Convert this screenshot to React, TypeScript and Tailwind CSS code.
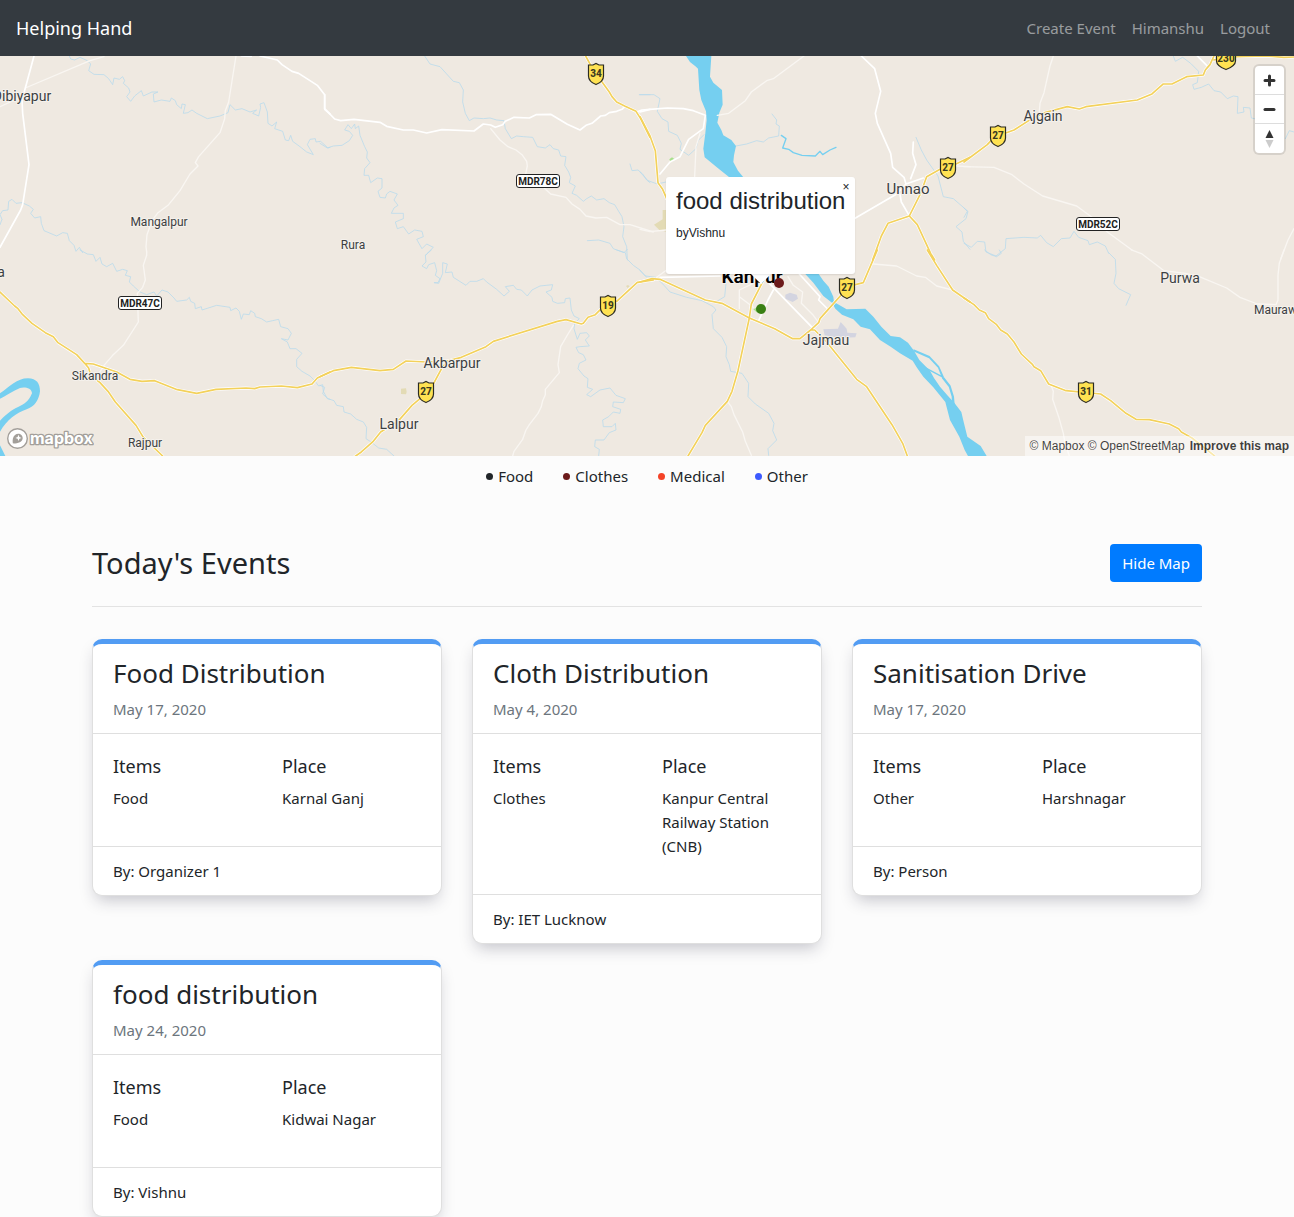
import React from "react";

type Sheet = {
  x: number;
  y: number;
  streams?: string;
  water?: string;
  channels?: string;
  minor?: string;
  major?: string;
  highway?: string;
  sand?: string;
  urban?: string;
  park?: string;
};

const sheets: Sheet[] = [
  {
    x: 0,
    y: -18,
    streams:
      "M208 18L212 27L224 30L240 22L262 32L272 42L266 62L282 73L312 74L326 86L338 104L342 84L358 88L368 80L374 92L370 100L386 114L390 126L380 140L392 154L404 138L424 122L430 138L456 126L474 126L460 132L462 156L484 150L510 154L514 144L526 152L530 164L544 176L546 162L556 164L550 190L564 188L576 180L590 190L622 206L660 198L684 188L690 164L706 180L726 176L750 186L770 180L758 190L776 198L782 172L780 162L792 158L802 186L804 220L816 228L830 216L824 236L848 244L856 270L866 272L872 256L878 274L900 290L920 306L940 314L922 284L930 268L946 266L948 276L962 274L984 294L990 292M0 524L6 508L0 494L8 482L24 480L26 454L36 448L48 460L66 458L88 468L100 478L92 490L104 504L122 500L124 520L132 542L170 558L188 548L202 550L208 572L222 586L228 604L238 592L248 608",
    minor:
      "M0 170L66 140M76 114L270 32L312 20M708 18L686 156L676 182L674 206L660 248L596 320L586 338L594 348L570 372L540 422L504 466L474 488L456 512L441 554L438 590L440 606",
    major:
      "M102 18L76 114L66 150L68 190L87 344L68 464L62 480L0 592M724 18L754 19M780 18L832 30L846 44L876 64L896 70L930 92L952 106L974 134L974 178L990 192",
  },
  {
    x: 0,
    y: 582,
    streams:
      "M240 0L262 12L280 14L288 34L300 22L306 42L320 50L338 40L350 64L368 58L382 62L376 76L392 80L388 96L400 108L420 126L440 134L462 126L470 138L486 120L504 126L522 144L530 154L560 150L568 142L572 154L584 160L586 176L604 170L606 180L650 166L690 172L692 182L708 174L718 184L724 208L730 192L748 194L752 182L764 190L766 200L784 206L800 216L818 212L836 208L842 230L864 236L874 250L864 270L844 266L862 276L870 296L888 296L906 310L890 328L890 350L906 364L930 378L944 392L956 408L968 404L970 424L982 446L990 448",
    water:
      "M0 430C30 410 50 385 84 385C110 386 120 400 120 424C117 450 104 470 80 478C50 488 20 510 0 545L0 512C25 485 45 475 60 468C80 460 90 445 96 430C96 412 70 410 60 414C40 422 15 440 0 446ZM0 586L16 618L0 618Z",
    minor: "M440 6L440 16L430 46L436 90L428 112L412 130L415 216L370 286L338 316L312 346L296 372",
    highway:
      "M0 126L44 168L54 176L68 194L96 220L136 248L160 260L174 278L230 314L254 340L280 342L350 366L390 388L426 394L464 392L532 419L590 430L648 418L738 414L764 416L780 411L844 408L892 413L936 402L952 384L990 366M254 340L266 354L272 376L300 398L324 424L346 456L408 526L430 562L488 618",
  },
  {
    x: 960,
    y: -18,
    streams:
      "M314 18L330 42L360 50L400 94L418 98L430 120L428 156L436 190L448 212L462 204L490 206L510 204L530 210L552 212L556 236L574 266L590 258L610 260L638 262L652 290L676 294L690 284L700 296L716 300L722 318L738 320L734 346L746 366L752 382L748 398L766 408L756 430L770 436L790 454L800 446L814 438L830 450L852 446L868 458L884 464L896 484L906 500L912 530L908 560L920 590L922 630M0 280L22 294L40 288L66 286L88 272L98 256L88 244L74 240L84 224L94 236L104 222L106 236L116 228L120 256L134 290L142 306L140 324L150 338L134 356L132 376L146 376L152 398L172 384L186 386L186 414L174 424L180 442L196 444L200 432L210 424L232 432L222 450L234 466L222 474L214 490L250 490L250 506L226 516L232 536L250 530L266 552L284 540L306 544L310 560L290 568L306 596L320 582L340 592L320 612L316 616M930 342L936 362L954 360L968 372L980 390L990 398M958 134L990 134M802 572L836 570L870 580L880 596L912 608L922 598",
    minor:
      "M512 236L540 270L564 290L588 300L606 314L620 334L622 348L617 372L670 412L692 432L738 442L756 462L780 478L798 498L828 504L860 502L900 524L930 524L1000 546",
    major:
      "M14 134L14 176L44 207L62 212L102 208L180 217L200 229L250 240L280 240L320 249L366 239L462 243L490 222L512 225L526 232L548 224L556 214L582 202L628 204L648 194L692 193L742 223L780 240L798 226L816 220L842 198L856 196L868 188L890 184L906 178L914 170M950 186L966 180L990 178",
    highway: "M797 18L820 60L868 126L876 140L890 156L914 168L948 184L962 206L990 262",
  },
  {
    x: 960,
    y: 582,
    streams:
      "M334 0L316 16L318 36L306 48L320 56L326 44L344 38L350 62L346 76L360 86L354 98L342 98L356 100L368 70L368 38L382 42L376 68L396 66L400 82L438 106L450 94L470 94L490 86L500 96L530 118L552 138L568 124L556 110L580 106L590 118L604 120L622 138L636 120L660 108L698 104L694 120L678 126L696 142L698 154L712 160L734 158L736 146L750 144L754 180L762 198L778 206L764 220L762 236L772 268L780 250L800 248L808 258L796 270L808 288L780 290L768 292L776 308L790 314L798 330L778 340L774 356L792 378L804 386L802 412L818 418L800 434L812 440L840 420L870 414L888 436L916 446L910 458L880 456L878 470L902 478L900 490L880 486L866 500L848 510L850 530L876 530L886 520L888 540L868 548L852 570L826 570L824 590L838 598L836 618M0 406L14 412L8 432L24 446L42 452L50 466L70 470L72 486L92 492L110 508L130 516L140 532L138 566L156 578L176 594L200 598L222 618M890 0L916 8L920 26L940 46L960 60L980 82",
    sand: "M243 416L258 415L260 426L258 433L243 432ZM918 108L924 105L929 109L923 114Z",
    minor:
      "M760 226L744 252L722 290L714 344L718 368L676 418L676 434L668 452L664 470L654 490L628 524L618 540L608 568L582 604L578 618",
    highway:
      "M0 380L40 362L94 352L180 362L220 358L258 333L320 336L386 332L424 322L498 290L520 274L712 214L738 209L784 222L790 220L804 202L826 194L850 170L890 154L952 97L1000 90M386 332L368 350L340 402L300 446L276 466L236 512L182 546L158 576L124 606L104 620",
  },
  {
    x: 1920,
    y: -18,
    streams:
      "M288 288L320 282L350 272L370 276L386 264L416 258L418 228L408 222L410 210L396 192M0 134L42 134L60 146L52 184L66 206L84 216L86 244L112 256L124 280L120 298L146 316L168 296L174 272L192 254M0 366L24 392L52 402L78 396M828 262L844 300L860 330L894 378L910 440L940 446L984 484L978 506L948 530L966 546L970 574L990 598",
    water:
      "M138 18L150 36L168 50L174 56L178 120L184 150L198 184L200 210L196 250L190 296L194 322L236 356L268 382L310 382L294 362L280 336L282 316L288 288L274 270L250 256L244 240L232 218L238 188L248 164L246 120L220 98L210 80L214 18Z",
    channels: "M424 256L438 266L428 294L446 298L460 308L486 316L526 318L540 304L548 314L570 300L588 292",
    sand: "M68 480L90 480L90 548L58 540L42 524L68 508Z",
    park: "M88 328L96 322L103 327L98 334L90 332Z",
    minor:
      "M232 196L266 190L316 152L334 126L380 92L400 86L492 18M164 380L168 290L180 250M948 348L990 350M0 538L30 545L78 540",
    major:
      "M0 186L30 178L82 174L130 176L160 182L196 196L190 236L146 268L120 320L90 336L60 372M664 18L704 56L722 124L706 190L712 220L752 310L758 352L792 382L798 402L850 384M640 508L770 432L798 402M820 276L818 310L828 344L812 386M780 432L784 456L806 494",
    highway:
      "M0 200L30 258L46 302L54 398L68 418L80 446M990 322L940 346L900 358L860 380L842 430L808 498L744 520L724 558L698 630M808 498L832 524L872 610L884 630",
  },
  {
    x: 1920,
    y: 582,
    streams:
      "M0 62L16 78L48 82L72 106L90 126L140 142L186 152L220 170L228 180L216 194L220 236L246 262L260 290L258 320L268 344L272 364L306 370L326 400L324 440L346 462L386 490L402 520L398 542L410 570L384 596L386 616M224 158L254 140L258 100",
    water:
      "M440 0L500 24L536 72L550 92L566 110L580 140L582 156L620 178L676 176L700 200L724 230L752 258L780 262L804 278L822 302L838 330L870 362L882 384L900 410L922 436L944 460L964 486L972 520L982 560L1022 588L1040 618L984 618L974 600L958 560L930 510L916 456L880 412L850 380L830 352L818 332L780 310L752 290L720 270L690 238L662 230L640 208L606 194L586 176L576 158L550 138L520 98L496 72Z",
    channels:
      "M822 300L868 320L896 350L910 382L930 408L940 440L942 462M822 303L868 323L896 353L908 384L928 410L937 440L938 462M838 344L910 382",
    urban:
      "M436 134L450 128L470 134L474 146L458 156L436 146ZM550 238L594 236L602 216L620 236L622 248L650 250L646 262L600 264L554 256Z",
    park: "M340 178L352 172L352 188Z",
    minor:
      "M262 454L274 470L282 494L308 546L316 574L334 616M700 42L770 48L830 78L856 82L890 108L938 120M444 80L460 106L488 126L484 160L520 196L536 218M298 176L298 120L340 100M50 82L80 60L200 62M298 140L340 172",
    major:
      "M60 82L240 78M388 100L520 236M400 120L384 150L356 212M478 72L540 140L536 150L560 174",
    highway:
      "M712 0L670 98L646 104L608 130L540 206L536 218L512 240L480 266L458 266L404 236L328 204L246 160L196 150L60 88L36 86L0 96M512 240L524 240L560 276L650 388L680 410L756 524L788 580L802 618M376 80L334 162L328 204L294 362L276 424L262 454L196 526L186 548L144 618M862 0L890 46L938 120L990 156",
  },
  {
    x: 2892,
    y: -18,
    streams:
      "M628 18L634 34L656 22L680 40L704 64L700 98L686 104L690 118L712 112L734 102L750 122L770 126L790 146L808 138L822 140L820 190L840 186L838 172L858 174L862 204L880 208M964 266L976 242L990 246M0 474L10 484L0 502M0 580L22 592L40 574L62 576L66 606L96 618L124 596L126 566L180 562L220 564L230 556L248 578L268 590L292 566L318 564L330 544L344 562L372 572L376 584L400 576L424 588L434 610",
    minor:
      "M0 350L90 352L144 374L180 402L236 438L338 468L384 502L430 546L504 600M950 628L972 570L990 536M268 18L258 48L240 128L228 160L226 184",
    major: "M700 18L728 46",
    highway:
      "M0 336L70 284L90 262L150 240L200 208L242 188L310 170L346 177L366 170L520 150L564 132L598 102L624 102L668 80L718 75L724 60L738 44L750 18M750 30L780 22L840 19L910 18L960 22L990 21",
  },
  {
    x: 2892,
    y: 582,
    streams: "M434 8L454 28L456 70L450 100L464 116L500 134L486 166M62 0L80 14L98 20L112 10L106 0",
    minor:
      "M502 0L534 12L600 62L664 70L706 80L788 114L828 142L880 162L936 164L942 150L942 76L946 40L960 0M262 408L268 424L266 448L284 500L298 550L302 574L316 618",
    highway:
      "M0 144L30 164L46 180L64 188L74 206L98 224L110 240L130 252L150 276L172 312L206 344L210 350L230 362L254 402L306 422L410 432L440 452L486 490L516 508L556 509L616 522L644 536L652 546L684 564L752 618",
  },
];

type LayerKey = Exclude<keyof Sheet, "x" | "y">;

function Layer({ of, ...style }: { of: LayerKey } & Omit<React.SVGProps<SVGGElement>, "of">) {
  return (
    <g fill="none" strokeLinejoin="round" strokeLinecap="round" {...style}>
      {sheets.map((s) =>
        s[of] ? <path key={`${s.x} ${s.y}`} transform={`translate(${s.x} ${s.y})`} d={s[of]} /> : null
      )}
    </g>
  );
}

const places = [
  { name: "Dibiyapur", x: 22, y: 45, size: 14 },
  { name: "Mangalpur", x: 159, y: 170, size: 12 },
  { name: "Rura", x: 353, y: 193, size: 12 },
  { name: "a", x: 1, y: 221, size: 14 },
  { name: "Sikandra", x: 95, y: 324, size: 12 },
  { name: "Rajpur", x: 145, y: 391, size: 12 },
  { name: "Akbarpur", x: 452, y: 312, size: 14 },
  { name: "Lalpur", x: 399, y: 373, size: 14 },
  { name: "Jajmau", x: 826, y: 289, size: 14 },
  { name: "Unnao", x: 908, y: 138, size: 15 },
  { name: "Ajgain", x: 1043, y: 65, size: 14 },
  { name: "Purwa", x: 1180, y: 227, size: 14 },
  { name: "Maurawan", x: 1282, y: 258, size: 12 },
];

const shields = [
  { ref: "34", x: 596, y: 18 },
  { ref: "19", x: 608, y: 250 },
  { ref: "27", x: 426, y: 336 },
  { ref: "27", x: 847, y: 232 },
  { ref: "27", x: 948, y: 112 },
  { ref: "27", x: 998, y: 80 },
  { ref: "31", x: 1086, y: 336 },
];

const plates = [
  { ref: "MDR78C", x: 538, y: 125 },
  { ref: "MDR47C", x: 140, y: 247 },
  { ref: "MDR52C", x: 1098, y: 168 },
];

function MapCanvas() {
  return (
    <svg
      className="block h-full w-full bg-[#efe9e1]"
      viewBox="0 0 1294 400"
      preserveAspectRatio="xMidYMid slice"
      role="img"
      aria-label="Map of events around Kanpur"
      fontFamily="Roboto, sans-serif"
    >
      <g transform="scale(0.33333)">
        <Layer of="sand" fill="#e3dbb5" />
        <Layer of="urban" fill="#d3d4e0" />
        <Layer of="park" fill="#a9e08c" />
        <Layer of="streams" stroke="#b9daec" strokeWidth="2.4" />
        <Layer of="water" fill="#75cff0" />
        <Layer of="channels" stroke="#75cff0" strokeWidth="4" />
        <Layer of="minor" stroke="#f9f6f2" strokeWidth="4" />
        <Layer of="major" stroke="#ffffff" strokeWidth="5" />
        <Layer of="highway" stroke="#ffffff" strokeWidth="9" />
        <Layer of="highway" stroke="#f3d15b" strokeWidth="5" />
      </g>

      <g textAnchor="middle" fill="#3c3f42" stroke="#f5f1ec" strokeWidth="2" strokeLinejoin="round" paintOrder="stroke">
        {places.map((p) => (
          <text key={p.name} x={p.x} y={p.y} fontSize={p.size}>
            {p.name}
          </text>
        ))}
        <text x="752" y="227" fontSize="19" fontWeight="600" fill="#000">
          Kanpur
        </text>
      </g>

      <g textAnchor="middle" fontWeight="700" fontSize="10">
        {shields.map((s) => (
          <g key={`${s.x} ${s.y}`} transform={`translate(${s.x} ${s.y})`}>
            <path
              d="M-7.5 -9H-3L0 -10.5L3 -9H7.5V2C7.5 6 4 9 0 10.5C-4 9 -7.5 6 -7.5 2Z"
              fill="#ffe252"
              stroke="#2b2b22"
              strokeWidth="1.2"
            />
            <text y="3" fill="#3a3a20" fontSize="10" fontWeight="800">
              {s.ref}
            </text>
          </g>
        ))}
        <g transform="translate(1226 3)">
          <path d="M-9.5 -9H9.5V2C9.5 6 4 9 0 10.5C-4 9 -9.5 6 -9.5 2Z" fill="#ffe252" stroke="#2b2b22" strokeWidth="1.2" />
          <text y="3" fill="#3a3a20" fontSize="10" fontWeight="800">
            230
          </text>
        </g>
        {plates.map((p) => (
          <g key={p.ref} transform={`translate(${p.x} ${p.y})`}>
            <rect x="-21.5" y="-6.5" width="43" height="13" rx="2.5" fill="#fff" stroke="#222" />
            <text y="4" fill="#222">
              {p.ref}
            </text>
          </g>
        ))}
      </g>

      <circle cx="779" cy="227" r="5" fill="#6c1a1a" />
      <circle cx="761" cy="253" r="5" fill="#3a8014" />
    </svg>
  );
}

function MapboxLogo() {
  return (
    <svg width="88" height="23" viewBox="0 0 88 23" aria-hidden="true">
      <circle cx="11.5" cy="11.5" r="9.8" fill="#fff" stroke="#a39f9a" strokeWidth="1.4" />
      <path
        d="M6.8 16.2C6.3 12.6 6.9 9.6 9 7.9C11.2 6.2 14.3 6.4 15.8 8.4C17.3 10.4 16.9 13 15 14.6C13 16.3 9.8 16.7 6.8 16.2Z"
        fill="#a39f9a"
      />
      <path d="M12.5 7.8L13.4 10L15.6 10.9L13.4 11.8L12.5 14L11.6 11.8L9.4 10.9L11.6 10Z" fill="#fff" />
      <text
        x="24"
        y="17"
        fontFamily="Inter, sans-serif"
        fontSize="16"
        fontWeight="700"
        fill="#fff"
        stroke="#a39f9a"
        strokeWidth="2.6"
        strokeLinejoin="round"
        paintOrder="stroke"
      >
        mapbox
      </text>
    </svg>
  );
}

function MapControls() {
  const button = "flex h-[29px] w-[29px] cursor-pointer items-center justify-center";
  return (
    <div className="absolute top-[10px] right-[10px] divide-y divide-[#dddddd] rounded bg-white shadow-[0_0_0_2px_rgba(0,0,0,0.1)]">
      <button type="button" aria-label="Zoom in" className={button}>
        <svg width="29" height="29" viewBox="0 0 29 29" stroke="#333" strokeWidth="3" strokeLinecap="round">
          <path d="M10 14.5H19M14.5 10V19" />
        </svg>
      </button>
      <button type="button" aria-label="Zoom out" className={button}>
        <svg width="29" height="29" viewBox="0 0 29 29" stroke="#333" strokeWidth="3" strokeLinecap="round">
          <path d="M10 14.5H19" />
        </svg>
      </button>
      <button type="button" aria-label="Reset bearing to north" className={button}>
        <svg width="29" height="29" viewBox="0 0 29 29">
          <path d="M10.5 14L14.5 6L18.5 14Z" fill="#333" />
          <path d="M10.5 16L14.5 24L18.5 16Z" fill="#ccc" />
        </svg>
      </button>
    </div>
  );
}

function MapPopup() {
  return (
    <div className="absolute top-[121px] left-[calc(50%+19px)] flex w-[189px] flex-col items-center font-['Liberation_Sans',Arial,sans-serif] text-[#212529]">
      <div className="relative w-full rounded-[3px] bg-white px-[10px] pt-[9px] pb-[15px] shadow-[0_1px_2px_rgba(0,0,0,0.1)]">
        <button
          type="button"
          aria-label="Close popup"
          className="absolute top-0 right-0 h-5 w-[18px] cursor-pointer text-xs leading-5"
        >
          ×
        </button>
        <h3 className="mb-2 text-2xl leading-[29px] whitespace-nowrap">food distribution</h3>
        <p className="mb-4 text-xs leading-5">byVishnu</p>
      </div>
      <div className="h-0 w-0 border-x-[10px] border-t-[10px] border-x-transparent border-t-white" />
    </div>
  );
}

const legend = [
  { label: "Food", dot: "bg-[#212529]" },
  { label: "Clothes", dot: "bg-[#6c1a1a]" },
  { label: "Medical", dot: "bg-[#f44328]" },
  { label: "Other", dot: "bg-[#3d5afe]" },
];

const events = [
  { title: "Food Distribution", date: "May 17, 2020", items: "Food", place: "Karnal Ganj", by: "Organizer 1" },
  {
    title: "Cloth Distribution",
    date: "May 4, 2020",
    items: "Clothes",
    place: "Kanpur Central Railway Station (CNB)",
    by: "IET Lucknow",
  },
  { title: "Sanitisation Drive", date: "May 17, 2020", items: "Other", place: "Harshnagar", by: "Person" },
  { title: "food distribution", date: "May 24, 2020", items: "Food", place: "Kidwai Nagar", by: "Vishnu" },
];

function EventCard({ event }: { event: (typeof events)[number] }) {
  return (
    <article className="rounded-[10px] border border-t-[5px] border-[#dfdfdf] border-t-[#529cf3] bg-white shadow-[0_8px_16px_-4px_rgba(30,30,60,0.25)]">
      <header className="border-b border-[#dfdfdf] px-5 py-3">
        <h3 className="mb-2 text-[26px] leading-[34px]">{event.title}</h3>
        <p className="leading-[23px] text-[#6c757d]">{event.date}</p>
      </header>
      <div className="grid grid-cols-2 gap-[30px] p-5">
        <div>
          <h5 className="mb-2 text-lg leading-6">Items</h5>
          <p className="mb-4">{event.items}</p>
        </div>
        <div>
          <h5 className="mb-2 text-lg leading-6">Place</h5>
          <p className="mb-4">{event.place}</p>
        </div>
      </div>
      <footer className="border-t border-[#dfdfdf] px-5 py-3">By: {event.by}</footer>
    </article>
  );
}

export default function App() {
  return (
    <div className="min-h-screen bg-[#fcfcfc] font-['Noto_Sans',sans-serif] text-[15px] leading-6 text-[#212529]">
      <nav className="flex h-14 items-center justify-between bg-[#343a40] px-4">
        <a href="#" className="text-lg leading-[30px] text-white">
          Helping Hand
        </a>
        <div className="flex gap-4 px-2 text-white/50">
          <a href="#create">Create Event</a>
          <a href="#profile">Himanshu</a>
          <a href="#logout">Logout</a>
        </div>
      </nav>

      <section className="relative h-[400px] overflow-hidden">
        <MapCanvas />
        <MapPopup />
        <MapControls />
        <a href="#mapbox" aria-label="Mapbox" className="absolute bottom-[6px] left-[6px]">
          <MapboxLogo />
        </a>
        <div className="absolute right-0 bottom-0 flex gap-[5px] bg-white/50 px-[5px] font-['Liberation_Sans',Arial,sans-serif] text-xs leading-5 text-black/75">
          <span>
            <a href="#mapbox">© Mapbox</a> <a href="#osm">© OpenStreetMap</a>
          </span>
          <a href="#improve" className="font-bold">
            Improve this map
          </a>
        </div>
      </section>

      <ul className="flex justify-center gap-[30px] pt-2">
        {legend.map((l) => (
          <li key={l.label} className="flex items-center gap-[5px]">
            <span className={`h-[7px] w-[7px] rounded-full ${l.dot}`} />
            {l.label}
          </li>
        ))}
      </ul>

      <main className="mx-auto max-w-[1140px] px-[15px] pt-14">
        <div className="flex items-center justify-between border-b border-[#e3e3e3] pb-6">
          <h2 className="text-[29px] leading-[38px]">Today's Events</h2>
          <button type="button" className="h-[38px] cursor-pointer rounded bg-[#007bff] px-3 text-white">
            Hide Map
          </button>
        </div>
        <div className="mt-8 grid grid-cols-3 items-start gap-x-[30px] gap-y-4">
          {events.map((e) => (
            <EventCard key={e.title} event={e} />
          ))}
        </div>
      </main>
    </div>
  );
}
